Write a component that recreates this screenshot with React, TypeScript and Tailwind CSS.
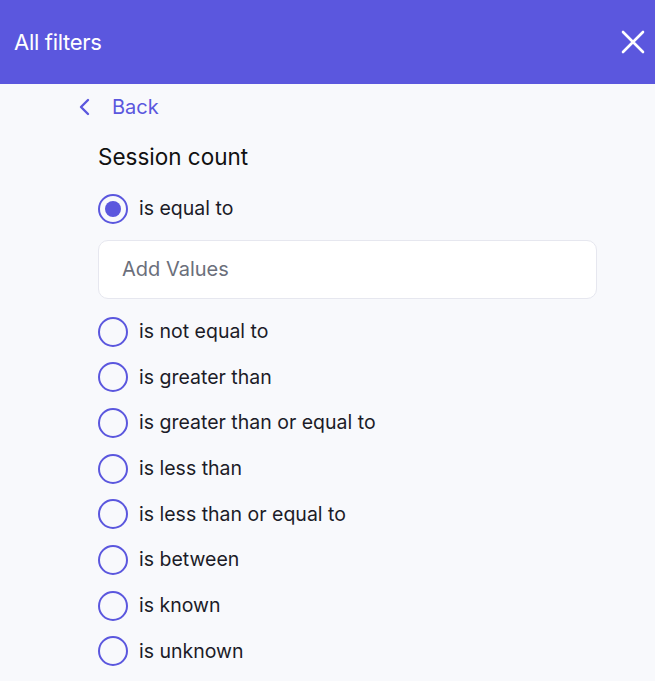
import React, { useState } from "react";

const options = [
  "is equal to",
  "is not equal to",
  "is greater than",
  "is greater than or equal to",
  "is less than",
  "is less than or equal to",
  "is between",
  "is known",
  "is unknown",
];

const Radio: React.FC<{ checked: boolean }> = ({ checked }) => (
  <span className="flex h-[30px] w-[30px] shrink-0 items-center justify-center rounded-full border-[2.5px] border-[#5b57de]">
    {checked && <span className="h-[16px] w-[16px] rounded-full bg-[#5b57de]" />}
  </span>
);

const App: React.FC = () => {
  const [selected, setSelected] = useState("is equal to");

  return (
    <div
      className="min-h-[681px] w-full bg-[#f8f9fc] text-[#1c1c28]"
      style={{ fontFamily: "Inter, 'Noto Sans', sans-serif" }}
    >
      <header className="flex h-[84px] items-center justify-between bg-[#5b57de] pl-[14px] pr-[6px]">
        <h1 className="text-[22px] font-normal tracking-[-0.3px] text-white">All filters</h1>
        <button className="flex h-[32px] w-[32px] items-center justify-center text-white">
          <svg width="24" height="24" viewBox="0 0 24 24" fill="none" stroke="currentColor" strokeWidth="2.6" strokeLinecap="round">
            <path d="M2 2L22 22M22 2L2 22" />
          </svg>
        </button>
      </header>

      <div className="pl-[78px] pr-[58px]">
        <button className="mt-[12px] flex h-[22px] items-center gap-[20px] text-[#5b57de]">
          <svg width="14" height="18" viewBox="0 0 14 18" fill="none" stroke="currentColor" strokeWidth="2.4" strokeLinecap="round" strokeLinejoin="round">
            <path d="M10 2L3 9L10 16" />
          </svg>
          <span className="text-[20px]">Back</span>
        </button>

        <div className="pl-[20px]">
          <h2 className="mt-[26px] text-[22.5px] leading-[26px] text-[#111]">Session count</h2>

          <div className="mt-[16px] flex flex-col">
            {options.map((opt) => (
              <React.Fragment key={opt}>
                <label
                  className="flex h-[45.7px] cursor-pointer items-center gap-[11px]"
                  onClick={() => setSelected(opt)}
                >
                  <Radio checked={selected === opt} />
                  <span className="text-[19.5px]">{opt}</span>
                </label>
                {opt === "is equal to" && selected === opt && (
                  <input
                    placeholder="Add Values"
                    className="mb-[10px] mt-[8px] h-[59px] w-full rounded-[10px] border border-[#e6e7ef] bg-white px-[23px] text-[20px] placeholder:text-[#6b6f7b] outline-none"
                  />
                )}
              </React.Fragment>
            ))}
          </div>
        </div>
      </div>
    </div>
  );
};

export default App;
